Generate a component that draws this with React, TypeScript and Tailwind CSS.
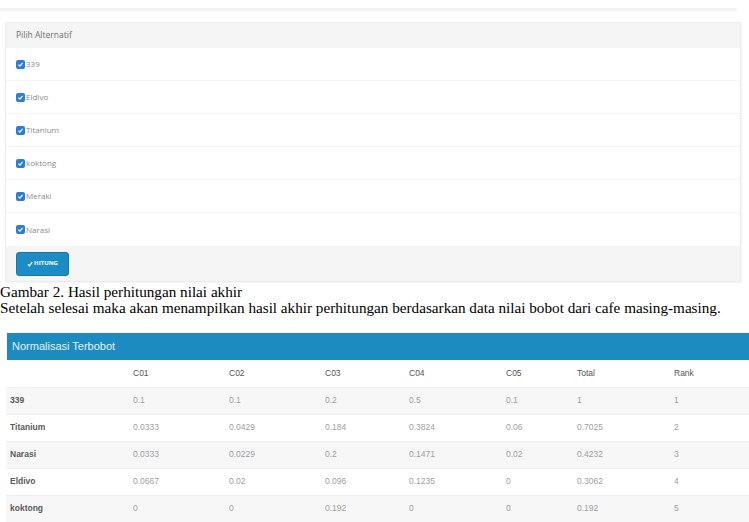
const alternatives = ["339", "Eldivo", "Titanium", "koktong", "Meraki", "Narasi"];

const headers = ["", "C01", "C02", "C03", "C04", "C05", "Total", "Rank"];
const widths = ["w-[123px]", "w-[96px]", "w-[96px]", "w-[84px]", "w-[97px]", "w-[71px]", "w-[97px]", "w-[79px]"];

const rows = [
  ["339", "0.1", "0.1", "0.2", "0.5", "0.1", "1", "1"],
  ["Titanium", "0.0333", "0.0429", "0.184", "0.3824", "0.06", "0.7025", "2"],
  ["Narasi", "0.0333", "0.0229", "0.2", "0.1471", "0.02", "0.4232", "3"],
  ["Eldivo", "0.0667", "0.02", "0.096", "0.1235", "0", "0.3062", "4"],
  ["koktong", "0", "0", "0.192", "0", "0", "0.192", "5"],
];

function Check() {
  return (
    <span className="flex h-[9px] w-[9px] items-center justify-center rounded-[2px] bg-[#2a7fd4]">
      <svg viewBox="0 0 10 10" className="h-[7px] w-[7px]">
        <path d="M2 5.2 L4.2 7.3 L8 2.8" fill="none" stroke="white" strokeWidth="1.8" />
      </svg>
    </span>
  );
}

export default function App() {
  return (
    <div className="h-[522px] w-[749px] overflow-hidden bg-white">
      {/* sisa panel di atas */}
      <div className="h-[11px] w-[737px] border-b-[3px] border-[#f3f3f3]" />

      <div className="ml-[5px] mt-[11px] w-[736px] border border-[#ececec] font-['Open_Sans',sans-serif] shadow-[1px_1px_2px_rgba(0,0,0,0.05)]">
        <div className="flex h-[25px] items-center bg-[#f5f5f5] pl-[10px] text-[8.5px] text-[#6f6f6f]">
          Pilih Alternatif
        </div>
        {alternatives.map((a, i) => (
          <div
            key={a}
            className={`flex h-[33px] items-center pl-[10px] text-[8px] text-[#8a8a8a] ${i < alternatives.length - 1 ? "border-b border-[#f4f4f4]" : ""}`}
          >
            <Check />
            <span className="ml-[1px]">{a}</span>
          </div>
        ))}
        <div className="flex h-[35px] items-center bg-[#f5f5f5] pl-[10px]">
          <button className="flex h-[24px] w-[53px] items-center justify-center gap-[1px] rounded-[3px] border border-[#1777a6] bg-[#1c8dc4] text-[6px] font-bold text-white">
            <svg viewBox="0 0 10 10" className="h-[6px] w-[6px]">
              <path d="M1.5 5.5 L4 8 L8.8 2" fill="none" stroke="white" strokeWidth="2" />
            </svg>
            HITUNG
          </button>
        </div>
      </div>

      <div className="mt-[2px] font-['Liberation_Serif',serif] text-[15.2px] leading-[16px] text-black">
        <p>Gambar 2. Hasil perhitungan nilai akhir</p>
        <p>Setelah selesai maka akan menampilkan hasil akhir perhitungan berdasarkan data nilai bobot dari cafe masing-masing.</p>
      </div>

      <div className="ml-[7px] mt-[17px] font-['Liberation_Sans',sans-serif]">
        <div className="flex h-[27px] items-center bg-[#1b8bc0] pl-[5px] text-[11px] text-[#e6f3fa]">
          Normalisasi Terbobot
        </div>
        <table className="-ml-[1px] border-collapse text-[8.5px]">
          <thead>
            <tr className="h-[27px]">
              {headers.map((h, i) => (
                <th key={i} className={`${widths[i]} pl-[4px] text-left font-normal text-[#555]`}>
                  {h}
                </th>
              ))}
            </tr>
          </thead>
          <tbody>
            {rows.map((r, ri) => (
              <tr key={r[0]} className={`h-[27px] border-t border-[#eeeeee] ${ri % 2 === 0 ? "bg-[#f7f7f7]" : "bg-white"}`}>
                {r.map((c, ci) => (
                  <td
                    key={ci}
                    className={`${widths[ci]} pl-[4px] ${ci === 0 ? "font-bold text-[#5a5a5a]" : "text-[#a0a0a0]"}`}
                  >
                    {c}
                  </td>
                ))}
              </tr>
            ))}
          </tbody>
        </table>
      </div>
    </div>
  );
}
